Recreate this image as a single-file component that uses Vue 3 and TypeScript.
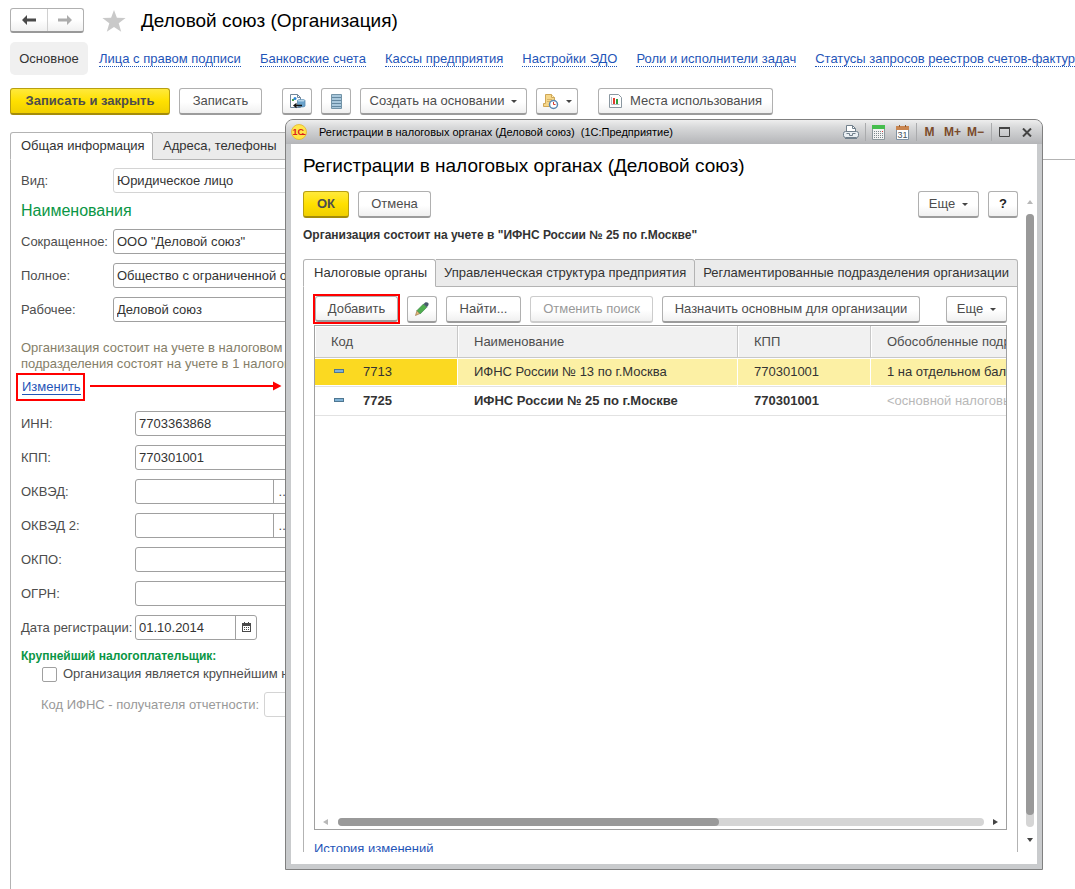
<script setup lang="ts">
import { ref } from 'vue'

interface Row {
  code: string
  name: string
  kpp: string
  units: string
  main: boolean
}

const links: string[] = [
  'Лица с правом подписи',
  'Банковские счета',
  'Кассы предприятия',
  'Настройки ЭДО',
  'Роли и исполнители задач',
  'Статусы запросов реестров счетов-фактур',
]

const names = ref([
  { id: 'short', label: 'Сокращенное:', value: 'ООО "Деловой союз"' },
  { id: 'full', label: 'Полное:', value: 'Общество с ограниченной ответственностью "Деловой союз"' },
  { id: 'work', label: 'Рабочее:', value: 'Деловой союз' },
])

const codes = ref([
  { id: 'inn', label: 'ИНН:', value: '7703363868', pick: false },
  { id: 'kpp', label: 'КПП:', value: '770301001', pick: false },
  { id: 'okved', label: 'ОКВЭД:', value: '', pick: true },
  { id: 'okved2', label: 'ОКВЭД 2:', value: '', pick: true },
  { id: 'okpo', label: 'ОКПО:', value: '', pick: false },
  { id: 'ogrn', label: 'ОГРН:', value: '', pick: false },
])

const kind = ref('Юридическое лицо')
const regDate = ref('01.10.2014')
const largest = ref(false)
const selected = ref('7713')

const rows: Row[] = [
  { code: '7713', name: 'ИФНС России № 13 по г.Москва', kpp: '770301001', units: '1 на отдельном балансе', main: false },
  { code: '7725', name: 'ИФНС России № 25 по г.Москве', kpp: '770301001', units: '<основной налоговый орган>', main: true },
]
</script>

<template>
  <div class="page">
    <header class="head">
      <div class="history">
        <button type="button" aria-label="Назад">
          <svg width="14" height="10" viewBox="0 0 14 10"><path d="M0 5 5 0v3.6h9v2.8H5V10z" fill="#4a4a4a" /></svg>
        </button>
        <button type="button" aria-label="Вперед">
          <svg width="14" height="10" viewBox="0 0 14 10"><path d="M14 5 9 0v3.6H0v2.8h9V10z" fill="#acacac" /></svg>
        </button>
      </div>
      <svg class="star" width="24" height="22" viewBox="0 0 24 22"><path d="M12 0l2.900 7.800 8.700.3-6.900 5.200 2.500 8.500L12 17l-7.200 4.800 2.500-8.500L.4 8.100l8.700-.3z" fill="#c9c9c9" /></svg>
      <h1>Деловой союз (Организация)</h1>
    </header>

    <nav class="nav">
      <span class="current">Основное</span>
      <a v-for="l in links" :key="l" href="#">{{ l }}</a>
    </nav>

    <div class="bar">
      <button type="button" class="btn primary wide">Записать и закрыть</button>
      <button type="button" class="btn save">Записать</button>
      <button type="button" class="btn icon gap" aria-label="Движения документа">
        <svg width="17" height="17" viewBox="0 0 17 17">
          <path d="M1.500 1.500h7l3 3v10h-10z" fill="#fff" stroke="#71869a" />
          <path d="M8.500 1.500v3h3" fill="none" stroke="#71869a" />
          <path d="M3 6h2v2H3z" fill="#4aa04a" /><circle cx="6" cy="5.500" r="1.500" fill="#2c86d8" />
          <path d="M8.500 7.500c0-1.300 7.500-1.300 7.500 0v5.500c0 1.300-7.500 1.300-7.500 0z" fill="#6aa3cc" stroke="#5c8cb0" stroke-width=".8" />
          <ellipse cx="12.200" cy="7.700" rx="3.300" ry=".9" fill="#b7d6ea" />
          <path d="M4 12.500 7.500 9.800v2H13v1.500H7.500v2z" fill="#111" />
        </svg>
      </button>
      <button type="button" class="btn icon" aria-label="Список">
        <svg width="11" height="15" viewBox="0 0 11 15">
          <path d="M.5.5h10v14H.5z" fill="#a9c8dc" stroke="#7394a8" />
          <path d="M1 3.500h9M1 6.500h9M1 9.500h9M1 12.500h9" stroke="#6488a0" />
        </svg>
      </button>
      <button type="button" class="btn create">Создать на основании<i class="caret"></i></button>
      <button type="button" class="btn remind" aria-label="Напоминание">
        <svg width="17" height="17" viewBox="0 0 17 17">
          <path d="M3.500 1.500h6l3 3v9h-11v-3h2z" fill="#f6d78a" stroke="#cfa757" />
          <path d="M9.500 1.500v3h3" fill="#fff0c4" stroke="#cfa757" />
          <path d="M5 6.500h5M5 8.500h3" stroke="#d8b468" />
          <circle cx="11.500" cy="11.500" r="4" fill="#fff" stroke="#5b87b0" stroke-width="1.500" />
          <path d="M11.500 9v2.500h2" fill="none" stroke="#d43b2d" />
        </svg>
        <i class="caret"></i>
      </button>
      <button type="button" class="btn usage gap">
        <svg width="13" height="14" viewBox="0 0 13 14">
          <path d="M.5.5h9l3 3v10H.5z" fill="#fff" stroke="#8a97a0" />
          <path d="M2.500 3v7.500h8" fill="none" stroke="#b5bdc3" />
          <path d="M4 4h2v6H4z" fill="#e03a2c" /><path d="M7 5h2v5H7z" fill="#2fa13c" />
        </svg>
        Места использования
      </button>
    </div>

    <div class="tabs main-tabs">
      <button type="button" class="tab on">Общая информация</button>
      <button type="button" class="tab">Адреса, телефоны</button>
    </div>

    <main class="panel">
      <form class="form" @submit.prevent>
        <div class="row names">
          <label for="kind">Вид:</label>
          <input id="kind" v-model="kind" class="field pale" readonly />
        </div>
        <h2>Наименования</h2>
        <div v-for="n in names" :key="n.id" class="row names stack">
          <label :for="n.id">{{ n.label }}</label>
          <input :id="n.id" v-model="n.value" class="field" />
        </div>

        <p class="info">
          Организация состоит на учете в налоговом органе, обособленные<br />
          подразделения состоят на учете в 1 налоговом органе
        </p>
        <div class="change"><a href="#">Изменить</a></div>

        <div v-for="c in codes" :key="c.id" class="row codes stack">
          <label :for="c.id">{{ c.label }}</label>
          <div v-if="c.pick" class="combo pick">
            <input :id="c.id" v-model="c.value" />
            <button type="button" aria-label="Выбрать">...</button>
          </div>
          <input v-else :id="c.id" v-model="c.value" class="field" />
        </div>
        <div class="row codes">
          <label for="date">Дата регистрации:</label>
          <div class="combo date">
            <input id="date" v-model="regDate" />
            <button type="button" aria-label="Календарь">
              <svg width="9" height="10" viewBox="0 0 9 10" shape-rendering="crispEdges">
                <path d="M0 1h9v9H0z" fill="#4a4a4a" /><path d="M1 4h7v5H1z" fill="#fff" />
                <path d="M2 0h1v2H2zM6 0h1v2H6z" fill="#4a4a4a" />
                <path d="M2 5h1v1H2zM4 5h1v1H4zM6 5h1v1H6zM2 7h1v1H2zM4 7h1v1H4zM6 7h1v1H6z" fill="#4a4a4a" />
              </svg>
            </button>
          </div>
        </div>

        <h3>Крупнейший налогоплательщик:</h3>
        <div class="check">
          <input id="largest" v-model="largest" type="checkbox" />
          <label for="largest">Организация является крупнейшим налогоплательщиком</label>
        </div>
        <div class="row receiver">
          <label for="receiver">Код ИФНС - получателя отчетности:</label>
          <input id="receiver" class="field pale" disabled />
        </div>
      </form>
    </main>

    <svg class="arrow" width="192" height="10" viewBox="0 0 192 10"><path d="M0 5h186" stroke="#f00" stroke-width="2" /><path d="M183 .5 191.500 5 183 9.500z" fill="#f00" /></svg>

    <section class="dialog" role="dialog" aria-label="Регистрации в налоговых органах">
      <div class="titlebar">
        <svg width="16" height="16" viewBox="0 0 16 16">
          <circle cx="8" cy="8" r="7.500" fill="#ffe54a" stroke="#e3b52c" stroke-width=".8" />
          <text x="1.500" y="11" class="logo">1С</text>
          <path d="M9.500 10.500h5" stroke="#d8201b" />
        </svg>
        <span class="caption">Регистрации в налоговых органах (Деловой союз)&nbsp; (1С:Предприятие)</span>
        <div class="tools">
          <button type="button" aria-label="Печать">
            <svg width="16" height="15" viewBox="0 0 16 15">
              <path d="M3.500 7V.5h6l3 3V7" fill="#fff" stroke="#71808c" /><path d="M9.500.5v3h3" fill="none" stroke="#71808c" />
              <rect x=".5" y="6.500" width="15" height="6" rx="2" fill="#e9eef2" stroke="#71808c" />
              <path d="M3.500 8.500h3v2h3v-2h3" fill="none" stroke="#71808c" /><path d="M2 13.500h12" stroke="#71808c" />
            </svg>
          </button>
          <i class="sep"></i>
          <button type="button" aria-label="Калькулятор">
            <svg width="13" height="15" viewBox="0 0 13 15">
              <path d="M.5.5h12v14H.5z" fill="#f2f3f3" stroke="#8c979c" /><path d="M0 0h13v4H0z" fill="#45bd4d" />
              <path d="M2 6.500h7M2 8.500h7M2 10.500h7M2 12.500h7" stroke="#7c878c" stroke-dasharray="1 1" />
              <path d="M10 6.500h1" stroke="#d33" /><path d="M10 8.500h1M10 10.500h1M10 12.500h1" stroke="#7c878c" />
            </svg>
          </button>
          <button type="button" aria-label="Календарь" class="cal">
            <svg width="13" height="15" viewBox="0 0 13 15">
              <path d="M.5 1.500h12v13H.5z" fill="#fff" stroke="#7f92a3" /><path d="M0 1h13v4H0z" fill="#c9854f" />
              <path d="M3.500 0v2M9.500 0v2" stroke="#8a5a34" />
              <text x="1.500" y="13" class="day">31</text>
            </svg>
          </button>
          <i class="sep before-mem"></i>
          <button type="button" class="mem">M</button>
          <button type="button" class="mem">M+</button>
          <button type="button" class="mem">M−</button>
          <i class="sep after-mem"></i>
          <button type="button" aria-label="Развернуть">
            <svg width="11" height="10" viewBox="0 0 11 10"><path d="M.5 1h10v8.500H.5z" fill="none" stroke="#444" /><path d="M0 1h11" stroke="#444" stroke-width="2" /></svg>
          </button>
          <button type="button" aria-label="Закрыть" class="close">
            <svg width="10" height="9" viewBox="0 0 10 9"><path d="M1 .5l8 8M9 .5l-8 8" stroke="#444" stroke-width="2" /></svg>
          </button>
        </div>
      </div>

      <div class="body">
        <h1>Регистрации в налоговых органах (Деловой союз)</h1>
        <div class="view">
          <div class="scrolled">
            <div class="bar cmd">
              <button type="button" class="btn primary ok">ОК</button>
              <button type="button" class="btn cancel">Отмена</button>
              <button type="button" class="btn more">Еще<i class="caret"></i></button>
              <button type="button" class="btn icon help">?</button>
            </div>
            <p class="status">Организация состоит на учете в "ИФНС России № 25 по г.Москве"</p>

            <div class="tabs">
              <button type="button" class="tab on tax">Налоговые органы</button>
              <button type="button" class="tab structure">Управленческая структура предприятия</button>
              <button type="button" class="tab last">Регламентированные подразделения организации</button>
            </div>
            <div class="sheet">
              <div class="bar">
                <div class="mark"><button type="button" class="btn add">Добавить</button></div>
                <button type="button" class="btn icon" aria-label="Изменить">
                  <svg width="14" height="14" viewBox="0 0 14 14">
                    <path d="M.5 13.500 2 8.500 5 11.500z" fill="#e5b77b" stroke="#8d6b3c" stroke-width=".6" />
                    <path d="M2 8.500 8.500 2l3.300 3.300L5.300 11.800z" fill="#4fae4f" stroke="#2f7a3b" stroke-width=".6" />
                    <path d="M8.500 2 10.500.3q2-.3 3 1v1.700L11.800 5.300z" fill="#47596b" />
                  </svg>
                </button>
                <button type="button" class="btn find">Найти...</button>
                <button type="button" class="btn undo" disabled>Отменить поиск</button>
                <button type="button" class="btn assign">Назначить основным для организации</button>
                <button type="button" class="btn more">Еще<i class="caret"></i></button>
              </div>
              <div class="grid">
                <div class="clip">
                  <table>
                    <colgroup><col class="c1" /><col class="c2" /><col class="c3" /><col class="c4" /></colgroup>
                    <thead>
                      <tr><th>Код</th><th>Наименование</th><th>КПП</th><th>Обособленные подразделения</th></tr>
                    </thead>
                    <tbody>
                      <tr v-for="r in rows" :key="r.code" :class="{ sel: r.code === selected, bold: r.main }" @click="selected = r.code">
                        <td><i class="dash"></i>{{ r.code }}</td>
                        <td>{{ r.name }}</td>
                        <td>{{ r.kpp }}</td>
                        <td :class="{ faint: r.main }">{{ r.units }}</td>
                      </tr>
                    </tbody>
                  </table>
                </div>
                <div class="hscroll">
                  <i class="tri left"></i>
                  <div class="track"><div class="thumb"></div></div>
                  <i class="tri right"></i>
                </div>
              </div>
              <a href="#" class="log">История изменений</a>
            </div>
          </div>
          <div class="vscroll">
            <i class="tri up"></i>
            <div class="track"><div class="thumb"></div></div>
            <i class="tri down"></i>
          </div>
        </div>
      </div>
    </section>
  </div>
</template>

<style>
body {
  margin: 0;
  background: #fff;
}
</style>

<style scoped>
* {
  box-sizing: border-box;
}
.page {
  position: relative;
  min-height: 100vh;
  display: flex;
  flex-direction: column;
  overflow: hidden;
  font: 13px/16px "Liberation Sans", Arial, sans-serif;
  color: #4d4d4d;
}
button,
input {
  font: inherit;
  color: inherit;
  margin: 0;
}
button {
  padding: 0;
  white-space: nowrap;
}
h1,
h2,
h3,
p {
  margin: 0;
  font-weight: normal;
}
h1 {
  font-size: 19px;
  line-height: 24px;
  color: #000;
  white-space: nowrap;
}
a {
  color: #1f55b8;
  text-decoration: none;
}
.head {
  display: flex;
  align-items: center;
  padding: 7px 10px 0;
  height: 34px;
}
.history {
  display: flex;
  width: 74px;
  height: 25px;
  border: 1px solid #b0b0b0;
  border-bottom: 2px solid #999;
  border-radius: 3px;
  background: linear-gradient(#fff 50%, #f0f0f0);
}
.history button {
  flex: 1;
  display: flex;
  align-items: center;
  justify-content: center;
  border: 0;
  background: none;
}
.history button + button {
  border-left: 1px solid #d0d0d0;
}
.star {
  margin: 0 15px 0 18px;
}
.nav {
  display: flex;
  align-items: center;
  gap: 19px;
  margin-top: 8px;
  padding-left: 10px;
  height: 33px;
  white-space: nowrap;
}
.nav .current {
  flex: none;
  width: 78px;
  margin-right: -8px;
  line-height: 33px;
  text-align: center;
  background: #f0f0f0;
  border-radius: 5px;
  color: #333;
}
.nav a {
  line-height: 15px;
  border-bottom: 1px dotted #1f55b8;
}
.bar {
  display: flex;
  gap: 9px;
}
.page > .bar {
  padding: 13px 10px 0;
}
.btn {
  display: flex;
  align-items: center;
  justify-content: center;
  height: 27px;
  flex: none;
  border: 1px solid #b0b0b0;
  border-bottom: 2px solid #9c9c9c;
  border-radius: 3px;
  background: linear-gradient(#fff 55%, #f0f0f0);
  color: #4d4d4d;
}
.primary {
  border-color: #b89f10;
  border-bottom-color: #a48c0a;
  background: linear-gradient(#ffe93c, #ffe000 50%, #f0cf00);
  font-weight: bold;
}
.btn:disabled {
  color: #999;
  border-color: #ccc;
}
.wide {
  width: 160px;
}
.save {
  width: 83px;
}
.icon {
  width: 30px;
}
.gap {
  margin-left: 11px;
}
.create {
  width: 167px;
}
.remind {
  width: 42px;
}
.usage {
  width: 175px;
  gap: 8px;
}
.caret {
  margin-left: 7px;
  border: 3px solid transparent;
  border-top-color: #444;
  border-bottom-width: 0;
}
.tabs {
  display: flex;
}
.main-tabs {
  padding: 17px 0 0 10px;
}
.tab {
  position: relative;
  z-index: 1;
  height: 28px;
  padding: 0 10px;
  border: 1px solid #b3b3b3;
  border-left-width: 0;
  border-radius: 0 3px 0 0;
  background: #ebebeb;
  color: #333;
}
.tab.on {
  width: 143px;
  border-left-width: 1px;
  border-bottom-color: #fff;
  border-radius: 3px 3px 0 0;
  background: #fff;
}
.panel {
  flex: 1;
  margin: -1px 0 0 10px;
  border: solid #b3b3b3;
  border-width: 1px 0 0 1px;
}
.form {
  padding: 8px 0 0 10px;
  width: 480px;
}
.row {
  display: flex;
  align-items: center;
}
.row.stack {
  margin-bottom: 9px;
}
.row label {
  white-space: nowrap;
}
.names label {
  width: 92px;
}
.codes label {
  width: 114px;
}
.field,
.combo {
  height: 25px;
  border: 1px solid #a0a0a0;
  border-radius: 3px;
  background: #fff;
}
.field {
  flex: 1;
  min-width: 0;
  padding: 0 3px;
  color: #333;
}
.pale {
  border-color: #d4d4d4;
}
.combo {
  display: flex;
}
.combo input {
  flex: 1;
  min-width: 0;
  padding: 0 3px;
  border: 0;
  background: none;
  color: #333;
}
.combo button {
  width: 21px;
  border: 0;
  border-left: 1px solid #a0a0a0;
  background: none;
}
.pick {
  width: 160px;
}
.date {
  width: 122px;
}
h2 {
  height: 36px;
  font-size: 16px;
  line-height: 36px;
  color: #0a9645;
}
.info {
  margin-top: 18px;
  color: #857e68;
  white-space: nowrap;
}
.change {
  display: flex;
  width: 69px;
  height: 28px;
  margin: 1px 0 10px -5px;
  padding: 4px 0 0 4px;
  border: 2px solid #f00;
}
.change a {
  height: 16px;
  line-height: 15px;
  border-bottom: 1px solid #1f55b8;
}
h3 {
  margin-top: 8px;
  font-size: 12px;
  line-height: 16px;
  font-weight: bold;
  color: #0a9645;
}
.check {
  display: flex;
  align-items: center;
  gap: 6px;
  margin: 2px 0 0 21px;
  white-space: nowrap;
}
.check input {
  appearance: none;
  width: 15px;
  height: 15px;
  border: 1px solid #a0a0a0;
  border-radius: 2px;
}
.receiver {
  margin: 10px 0 0 20px;
  gap: 5px;
  color: #999;
}
.arrow {
  position: absolute;
  left: 90px;
  top: 381px;
}
.dialog {
  position: absolute;
  z-index: 2;
  left: 285px;
  right: 32px;
  top: 119px;
  bottom: 19px;
  display: flex;
  flex-direction: column;
  padding: 0 5px 5px;
  border: 1px solid #808080;
  border-radius: 8px 8px 0 0;
  background: #c9cbcd;
}
.titlebar {
  display: flex;
  align-items: center;
  height: 24px;
  margin: 0 -5px;
  padding: 0 10px 0 5px;
  border-radius: 7px 7px 0 0;
  background: linear-gradient(#eee, #d8d9da 30%, #b4b5b8);
  color: #000;
  font-size: 11px;
}
.logo {
  font-size: 9px;
  font-weight: bold;
  fill: #d8201b;
}
.day {
  font-size: 9px;
  fill: #46535e;
}
.caption {
  margin-left: 12px;
  white-space: nowrap;
}
.tools {
  display: flex;
  align-items: center;
  margin-left: auto;
}
.tools button {
  display: flex;
  border: 0;
  background: none;
}
.tools .cal {
  margin-left: 11px;
}
.tools .close {
  margin-left: 12px;
}
.sep {
  width: 1px;
  height: 18px;
  margin: 0 6px;
  background: #aaabad;
}
.before-mem {
  margin: 0 1px 0 7px;
}
.after-mem {
  margin: 0 7px 0 4px;
}
.tools .mem {
  width: 23px;
  justify-content: center;
  color: #7a4a2a;
  font-weight: bold;
  font-size: 12px;
}
.body {
  flex: 1;
  min-height: 0;
  display: flex;
  flex-direction: column;
  padding: 10px 3px 12px 12px;
  background: #fff;
}
.view {
  flex: 1;
  min-height: 0;
  display: flex;
  margin-top: 13px;
}
.scrolled {
  flex: 1;
  min-width: 0;
  min-height: 0;
  overflow: hidden;
}
.ok {
  width: 46px;
}
.cancel {
  width: 73px;
}
.more {
  width: 61px;
  margin-left: auto;
}
.help {
  color: #222;
  font-weight: bold;
}
.status {
  margin: 9px 0 16px;
  font-size: 12px;
  font-weight: bold;
  color: #333;
  white-space: nowrap;
}
.tab.tax {
  width: 133px;
}
.tab.structure {
  width: 260px;
  padding: 0 8px;
}
.tab.last {
  flex: 1;
  padding: 0 8px;
}
.sheet {
  margin-top: -1px;
  padding: 8px 10px 0;
  border: 1px solid #b3b3b3;
  border-bottom: 0;
}
.sheet > .bar {
  height: 29px;
}
.sheet .btn {
  margin-top: 1px;
}
.sheet .mark {
  flex: none;
  width: 87px;
  height: 30px;
  margin: -1px -2px 0 -1px;
  border: 2px solid #f00;
}
.sheet .add {
  width: 83px;
  height: 26px;
  margin: 0;
}
.find {
  width: 75px;
}
.undo {
  width: 123px;
}
.assign {
  width: 258px;
}
.grid {
  display: flex;
  flex-direction: column;
  height: calc(100vh - 384px);
  margin-top: 1px;
  border: 1px solid #a0a0a0;
}
.clip {
  flex: 1;
  overflow: hidden;
}
table {
  width: 100%;
  min-width: 860px;
  table-layout: fixed;
  border-collapse: separate;
  border-spacing: 0;
  white-space: nowrap;
}
.c1 {
  width: 143px;
}
.c2 {
  width: 280px;
}
.c3 {
  width: 133px;
}
th {
  height: 32px;
  padding: 0 16px;
  text-align: left;
  font-weight: normal;
  background: #f1f1f1;
  border: solid #c8c8c8;
  border-width: 0 1px 1px 0;
  box-shadow: inset 1px 1px #fff;
}
td {
  height: 29px;
  padding: 0 16px;
  color: #333;
  border-bottom: 1px solid #e2e2e2;
}
.sel td {
  background: #fcf0a4;
  border-right: 1px solid #fff;
  box-shadow: inset 0 1px #fff, inset 0 -1px #fff;
}
.sel td:first-child {
  background: #fbd921;
}
.bold td {
  font-weight: bold;
}
.bold td.faint {
  font-weight: normal;
  color: #b8b8b8;
}
.dash {
  display: inline-block;
  width: 10px;
  height: 4px;
  margin: 0 19px 3px 3px;
  border: 1px solid #4f7791;
  background: #7fb2d6;
}
.hscroll {
  display: flex;
  align-items: center;
  height: 14px;
  padding: 0 8px;
}
.hscroll .track {
  flex: 1;
  height: 8px;
  margin: 0 9px 0 10px;
}
.track {
  border-radius: 4px;
  background: #d5d5d5;
}
.thumb {
  border-radius: 4px;
  background: #999;
}
.hscroll .thumb {
  width: 59%;
  height: 8px;
}
.tri {
  border: 3px solid transparent;
}
.tri.left {
  border-right: 5px solid #b8b8b8;
  border-left: 0;
}
.tri.right {
  border-left: 5px solid #444;
  border-right: 0;
}
.tri.up {
  border-bottom: 4px solid #b8b8b8;
  border-top: 0;
}
.tri.down {
  border-top: 4px solid #444;
  border-bottom: 0;
}
.vscroll {
  display: flex;
  flex-direction: column;
  align-items: center;
  width: 8px;
  margin-left: 8px;
  padding: 9px 0 10px;
}
.vscroll .track {
  flex: 1;
  width: 8px;
  margin: 10px 0 11px;
}
.vscroll .thumb {
  height: 98%;
}
.log {
  display: block;
  margin-top: 10px;
  line-height: 18px;
}
</style>
